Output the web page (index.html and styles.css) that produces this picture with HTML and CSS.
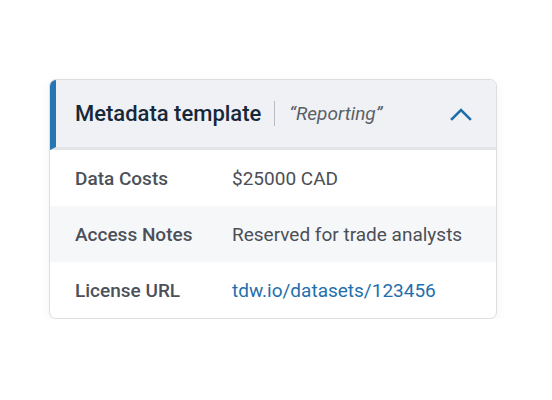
FILE: index.html
```html
<!DOCTYPE html>
<html>
<head>
<meta charset="utf-8">
<link rel="stylesheet" href="styles.css">
</head>
<body>
<div class="page">
  <div class="card">
    <div class="header">
      <div class="title">Metadata template</div>
      <div class="sep"></div>
      <div class="sub">“Reporting”</div>
      <svg class="chev" width="22" height="14" viewBox="0 0 22 14"><path d="M2 12 L11 3 L20 12" fill="none" stroke="#1f6fad" stroke-width="2.6" stroke-linecap="square"/></svg>
    </div>
    <div class="row">
      <div class="label">Data Costs</div>
      <div class="value">$25000 CAD</div>
    </div>
    <div class="row alt">
      <div class="label">Access Notes</div>
      <div class="value">Reserved for trade analysts</div>
    </div>
    <div class="row">
      <div class="label">License URL</div>
      <div class="value link">tdw.io/datasets/123456</div>
    </div>
  </div>
</div>
</body>
</html>
```
FILE: styles.css
```css
html, body { margin: 0; padding: 0; background: #fff; }
body { font-family: Roboto, "Noto Sans", sans-serif; }
.page { padding: 79px 0 0 49px; }
.card {
  width: 446px;
  border: 1px solid #dcdee2;
  border-radius: 7px;
  overflow: hidden;
  background: #fff;
  box-shadow: 0 3px 12px rgba(0,0,0,0.05);
}
.header {
  display: flex;
  align-items: center;
  height: 67px;
  background: #eff1f5;
  border-left: 6px solid #2576b3;
  border-bottom: 3px solid #e2e4e8;
  padding: 0 24px 0 19px;
}
.title { font-size: 22px; font-weight: 500; color: #17283a; }
.sep { width: 1px; height: 25px; background: #b9bcc2; margin: 0 14px 0 13px; }
.sub { font-size: 19px; font-style: italic; color: #5b5f66; flex: 1; }
.chev { display: block; }
.row {
  display: flex;
  align-items: center;
  height: 56px;
  padding-left: 25px;
  font-size: 19px;
}
.row.alt { background: #f6f7f9; }
.label { width: 157px; font-weight: 500; color: #4c5159; }
.value { color: #4c4f55; }
.value.link { color: #1f6fad; }
```
